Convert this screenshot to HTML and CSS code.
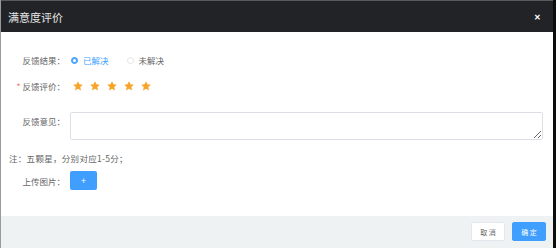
FILE: index.html
```html
<!DOCTYPE html>
<html lang="zh-CN">
<head>
    <meta charset="UTF-8">
    <title>满意度评价</title>
    <link rel="stylesheet" href="styles.css">
</head>
<body>
    <div class="dialog">
        <div class="dialog-header">
            <div class="dialog-title">满意度评价</div>
            <span class="dialog-close">&#x2715;</span>
        </div>

        <div class="dialog-body">
            <div class="form-item row-result">
                <div class="form-label">反馈结果：</div>
                <div class="radio-group">
                    <label class="radio checked"><span class="radio-dot"></span><span class="radio-text">已解决</span></label>
                    <label class="radio"><span class="radio-dot"></span><span class="radio-text">未解决</span></label>
                </div>
            </div>

            <div class="form-item row-rate">
                <div class="form-label"><span class="required">*</span>反馈评价：</div>
                <div class="rate">
                    <svg class="star" viewBox="0 0 20 20"><polygon points="10,0.5 13,6.6 19.6,7.3 14.6,11.8 16,18.8 10,15.3 4,18.8 5.4,11.8 0.4,7.3 7,6.6"/></svg>
                    <svg class="star" viewBox="0 0 20 20"><polygon points="10,0.5 13,6.6 19.6,7.3 14.6,11.8 16,18.8 10,15.3 4,18.8 5.4,11.8 0.4,7.3 7,6.6"/></svg>
                    <svg class="star" viewBox="0 0 20 20"><polygon points="10,0.5 13,6.6 19.6,7.3 14.6,11.8 16,18.8 10,15.3 4,18.8 5.4,11.8 0.4,7.3 7,6.6"/></svg>
                    <svg class="star" viewBox="0 0 20 20"><polygon points="10,0.5 13,6.6 19.6,7.3 14.6,11.8 16,18.8 10,15.3 4,18.8 5.4,11.8 0.4,7.3 7,6.6"/></svg>
                    <svg class="star" viewBox="0 0 20 20"><polygon points="10,0.5 13,6.6 19.6,7.3 14.6,11.8 16,18.8 10,15.3 4,18.8 5.4,11.8 0.4,7.3 7,6.6"/></svg>
                </div>
            </div>

            <div class="form-item row-opinion">
                <div class="form-label">反馈意见：</div>
                <textarea class="textarea"></textarea>
            </div>

            <div class="note">注：五颗星，分别对应1-5分；</div>

            <div class="form-item row-upload">
                <div class="form-label">上传图片：</div>
                <button class="upload-button">+</button>
            </div>
        </div>

        <div class="dialog-footer">
            <button class="btn btn-default">取 消</button>
            <button class="btn btn-primary">确 定</button>
        </div>
    </div>
</body>
</html>
```

FILE: styles.css
```css
body {
    margin: 0;
    padding: 0;
    background-color: #0c0c0d;
    font-family: "Noto Sans CJK SC", "Noto Sans", sans-serif;
}
.dialog {
    width: 552px;
    height: 248px;
    background-color: #fff;
    border-left: 1px solid #9a9a9a;
    display: flex;
    flex-direction: column;
}
.dialog-header {
    height: 31px;
    border-top: 1px solid #5a5a5c;
    background-color: #222327;
    display: flex;
    align-items: center;
    justify-content: space-between;
    padding: 0 12px 0 7px;
    flex-shrink: 0;
}
.dialog-title {
    color: #e6e6e6;
    font-size: 11px;
}
.dialog-close {
    color: #fff;
    font-size: 8px;
    font-weight: bold;
}
.dialog-body {
    flex: 1;
    padding-top: 18px;
    box-sizing: border-box;
}
.form-item {
    display: flex;
    align-items: center;
}
.form-label {
    width: 64px;
    margin-right: 5px;
    text-align: right;
    color: #666;
    font-size: 8.5px;
    line-height: 18px;
    flex-shrink: 0;
}
.required {
    color: #f56c6c;
    margin-right: 2px;
}
.row-result {
    height: 20px;
}
.radio-group {
    display: flex;
    align-items: center;
    gap: 17px;
}
.radio {
    display: flex;
    align-items: center;
    font-size: 8.5px;
    color: #666;
}
.radio-dot {
    width: 7px;
    height: 7px;
    border-radius: 50%;
    border: 1px solid #e4e4e4;
    box-sizing: border-box;
    margin: 0 5px 0 1px;
}
.radio.checked .radio-dot {
    border-color: #409eff;
    background-color: #409eff;
    box-shadow: inset 0 0 0 1px #409eff, inset 0 0 0 3px #fff;
}
.radio.checked .radio-text {
    color: #409eff;
}
.row-rate {
    height: 20px;
    margin-top: 6px;
}
.rate {
    display: flex;
    gap: 7px;
    margin-left: 3px;
}
.star {
    width: 10px;
    height: 10px;
    fill: #f7a52a;
}
.row-opinion {
    align-items: flex-start;
    margin-top: 16px;
}
.textarea {
    width: 473px;
    height: 28px;
    box-sizing: border-box;
    border: 1px solid #dcdfe6;
    border-radius: 2px;
    margin: 0;
    padding: 4px 6px;
    font-family: inherit;
}
.note {
    margin-top: 10px;
    padding-left: 8px;
    font-size: 8.5px;
    line-height: 16px;
    color: #666;
    letter-spacing: 0.3px;
}
.row-upload {
    margin-top: 5px;
}
.upload-button {
    width: 27px;
    height: 19px;
    border: none;
    border-radius: 2px;
    background-color: #409eff;
    color: #fff;
    font-size: 9px;
    padding: 0;
    font-family: inherit;
}
.dialog-footer {
    height: 32px;
    background-color: #eff2f2;
    display: flex;
    justify-content: flex-end;
    gap: 7px;
    padding: 6px 7px 0 0;
    box-sizing: border-box;
    flex-shrink: 0;
}
.btn {
    width: 34px;
    height: 19px;
    border-radius: 2px;
    font-size: 7px;
    padding: 0;
    font-family: inherit;
}
.btn-default {
    background-color: #fff;
    border: 1px solid #e4e7ed;
    color: #666;
}
.btn-primary {
    background-color: #409eff;
    border: 1px solid #409eff;
    color: #fff;
}
```
